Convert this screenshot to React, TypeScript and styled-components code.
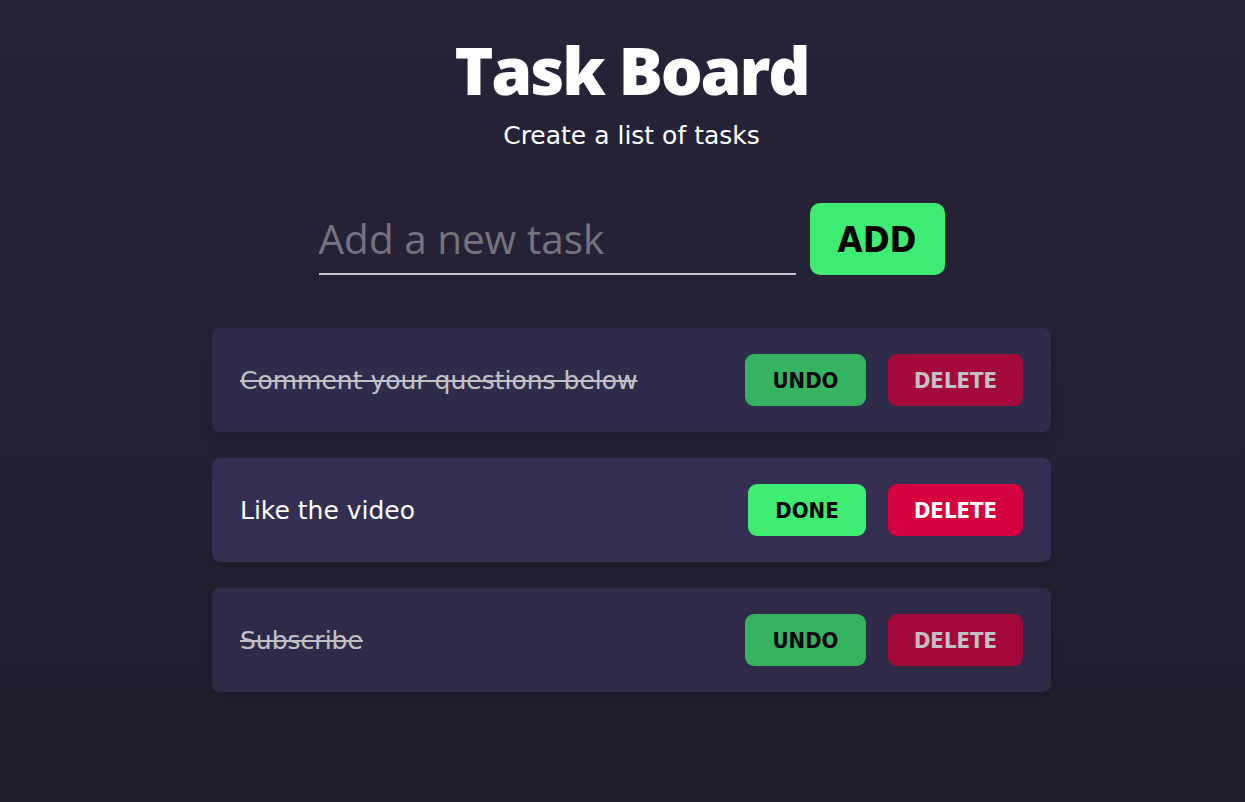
import React, { useState } from "react";
import styled, { createGlobalStyle } from "styled-components";

const Global = createGlobalStyle`
  html, body { margin: 0; padding: 0; }
  body {
    background: linear-gradient(180deg, #262338 0%, #242136 50%, #201e2c 100%);
    min-height: 100vh;
    font-family: "DejaVu Sans", "Open Sans", sans-serif;
    color: #fff;
  }
`;

const Page = styled.main`
  min-height: 802px;
  display: flex;
  flex-direction: column;
  align-items: center;
  padding: 24px 0 0 18px;
  box-sizing: border-box;
`;

const Title = styled.h1`
  margin: 0;
  font-family: "Open Sans", sans-serif;
  font-weight: 800;
  font-size: 66px;
  line-height: 90px;
  letter-spacing: -2.2px;
  color: #fff;
`;

const Subtitle = styled.p`
  margin: 6px 0 0;
  font-family: "DejaVu Sans", sans-serif;
  font-size: 25px;
  line-height: 32px;
  color: #fff;
`;

const Form = styled.form`
  display: flex;
  align-items: center;
  gap: 14px;
  margin-top: 51px;
`;

const Input = styled.input`
  width: 477px;
  height: 72px;
  box-sizing: border-box;
  background: transparent;
  border: none;
  border-bottom: 2px solid #c8c6d0;
  color: #fff;
  font-family: "Open Sans", sans-serif;
  font-size: 40.5px;
  padding: 0;
  outline: none;
  &::placeholder { color: #75727e; }
`;

const AddButton = styled.button`
  width: 135px;
  height: 72px;
  border: none;
  border-radius: 10px;
  background: #3dec70;
  color: #000;
  font-family: "DejaVu Sans Condensed", "DejaVu Sans", sans-serif;
  font-weight: 700;
  font-size: 36px;
  cursor: pointer;
`;

const List = styled.ul`
  list-style: none;
  margin: 53px 0 0;
  padding: 0;
  display: flex;
  flex-direction: column;
  gap: 26px;
`;

const Card = styled.li<{ $done: boolean }>`
  width: 839px;
  height: 104px;
  box-sizing: border-box;
  display: flex;
  align-items: center;
  padding: 0 28px;
  border-radius: 8px;
  background: #342f52;
  box-shadow: 0 4px 10px rgba(0, 0, 0, 0.18);
  opacity: ${(p) => (p.$done ? 0.72 : 1)};
`;

const TaskText = styled.span<{ $done: boolean }>`
  flex: 1;
  font-family: "DejaVu Sans", sans-serif;
  font-size: 25px;
  color: #fff;
  text-decoration: ${(p) => (p.$done ? "line-through" : "none")};
  text-decoration-thickness: 2px;
`;

const Actions = styled.div`
  display: flex;
  gap: 22px;
`;

const ActionButton = styled.button<{ $variant: "green" | "red"; $w: number }>`
  width: ${(p) => p.$w}px;
  height: 52px;
  border: none;
  border-radius: 9px;
  background: ${(p) => (p.$variant === "green" ? "#3dec70" : "#d5003e")};
  color: ${(p) => (p.$variant === "green" ? "#000" : "#fff")};
  font-family: "DejaVu Sans Condensed", "DejaVu Sans", sans-serif;
  font-weight: 700;
  font-size: 22px;
  cursor: pointer;
`;

type Task = { id: number; text: string; done: boolean };

export default function App() {
  const [tasks, setTasks] = useState<Task[]>([
    { id: 1, text: "Comment your questions below", done: true },
    { id: 2, text: "Like the video", done: false },
    { id: 3, text: "Subscribe", done: true },
  ]);
  const [value, setValue] = useState("");

  const add = (e: React.FormEvent) => {
    e.preventDefault();
    if (!value.trim()) return;
    setTasks([...tasks, { id: Date.now(), text: value, done: false }]);
    setValue("");
  };

  return (
    <>
      <Global />
      <Page>
        <Title>Task Board</Title>
        <Subtitle>Create a list of tasks</Subtitle>
        <Form onSubmit={add}>
          <Input
            placeholder="Add a new task"
            value={value}
            onChange={(e) => setValue(e.target.value)}
          />
          <AddButton type="submit">ADD</AddButton>
        </Form>
        <List>
          {tasks.map((t) => (
            <Card key={t.id} $done={t.done}>
              <TaskText $done={t.done}>{t.text}</TaskText>
              <Actions>
                <ActionButton
                  $variant="green"
                  $w={t.done ? 121 : 118}
                  onClick={() =>
                    setTasks(tasks.map((x) => (x.id === t.id ? { ...x, done: !x.done } : x)))
                  }
                >
                  {t.done ? "UNDO" : "DONE"}
                </ActionButton>
                <ActionButton
                  $variant="red"
                  $w={135}
                  onClick={() => setTasks(tasks.filter((x) => x.id !== t.id))}
                >
                  DELETE
                </ActionButton>
              </Actions>
            </Card>
          ))}
        </List>
      </Page>
    </>
  );
}
